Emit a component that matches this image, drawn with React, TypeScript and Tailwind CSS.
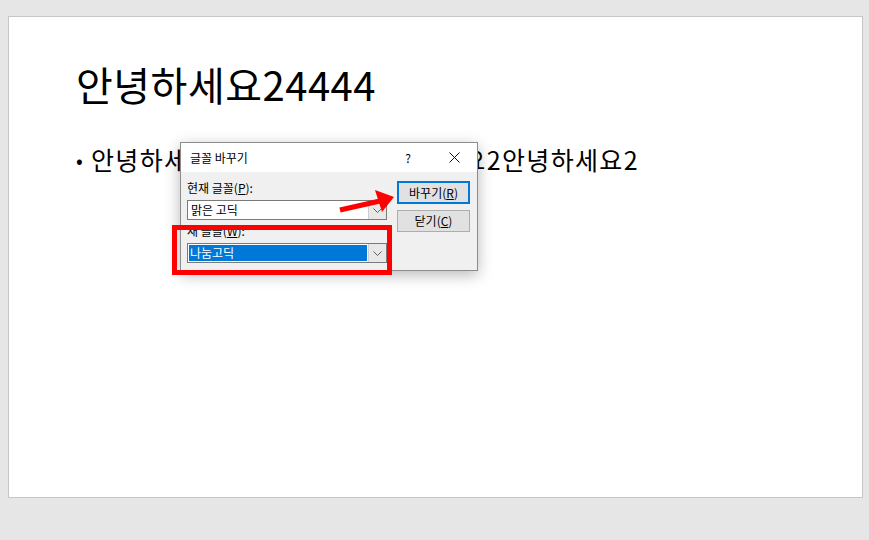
import React from "react";

const KR = { fontFamily: '"Noto Sans CJK KR", "Noto Sans", sans-serif' };

function Chevron() {
  return (
    <svg width="9" height="5" viewBox="0 0 9 5" fill="none">
      <path d="M0.5 0.5 L4.5 4.5 L8.5 0.5" stroke="#606060" strokeWidth="1" />
    </svg>
  );
}

function Combo({ value, selected }: { value: string; selected?: boolean }) {
  return (
    <div className="flex h-[20px] w-[200px] border border-[#7a7a7a] bg-white">
      <div className="flex flex-1 items-center p-[1px]">
        {selected ? (
          <div className="flex h-full w-full items-center bg-[#0078d7] pl-[1px] text-[12px] leading-none text-white">
            {value}
          </div>
        ) : (
          <div className="flex h-full w-full items-center pl-[2px] text-[12px] leading-none text-black">
            {value}
          </div>
        )}
      </div>
      <div className="flex w-[18px] items-center justify-center border-l border-[#cfcfcf] bg-[#e8e8e8]">
        <Chevron />
      </div>
    </div>
  );
}

export default function App() {
  return (
    <div className="relative h-[540px] w-[869px] overflow-hidden bg-[#e6e6e6] pl-[8px] pt-[16px]" style={KR}>
      <div className="h-[482px] w-[855px] border border-[#c6c6c6] bg-white pl-[67px] pt-[47px]">
        <div className="text-[40px] leading-none tracking-[0.5px] text-black">안녕하세요24444</div>
        <div className="mt-[43px] flex items-center text-[25px] leading-none text-black">
          <span className="w-[15px] text-[20px]">•</span>
          <span className="tracking-[1.35px]">안녕하세요2안녕하세요2안녕하세요2안녕하세요2</span>
        </div>
      </div>

      {/* Dialog */}
      <div className="absolute left-[180px] top-[142px] flex h-[129px] w-[298px] flex-col border border-[#8c8c8c] bg-[#f0f0f0] shadow-[0_4px_14px_rgba(0,0,0,0.28)]">
        <div className="flex h-[29px] items-center bg-white pl-[9px] text-[12px] leading-none text-black">
          <span className="flex-1">글꼴 바꾸기</span>
          <span className="w-[46px] text-center text-[12px]">?</span>
          <span className="flex w-[46px] items-center justify-center">
            <svg width="11" height="11" viewBox="0 0 11 11">
              <path d="M0.5 0.5 L10.5 10.5 M10.5 0.5 L0.5 10.5" stroke="#111" strokeWidth="1" />
            </svg>
          </span>
        </div>
        <div className="flex flex-1 pl-[6px] pt-[9px]">
          <div className="flex w-[200px] flex-col">
            <div className="h-[19px] text-[12px] leading-[14px] text-black">
              현재 글꼴(<span className="underline">P</span>):
            </div>
            <Combo value="맑은 고딕" />
            <div className="mt-[4px] h-[19px] text-[12px] leading-[14px] text-black">
              새 글꼴(<span className="underline">W</span>):
            </div>
            <Combo value="나눔고딕" selected />
          </div>
          <div className="ml-[10px] flex flex-col gap-[6px]">
            <div className="flex h-[23px] w-[73px] items-center justify-center border-2 border-[#0078d7] bg-[#e1e1e1] text-[12px] leading-none text-black">
              바꾸기(<span className="underline">R</span>)
            </div>
            <div className="flex h-[22px] w-[73px] items-center justify-center border border-[#adadad] bg-[#e1e1e1] text-[12px] leading-none text-black">
              닫기(<span className="underline">C</span>)
            </div>
          </div>
        </div>
      </div>

      {/* Red highlight rectangle */}
      <div className="absolute left-[172px] top-[225px] h-[50px] w-[220px] border-[5px] border-[#ff0000]" />

      {/* Red arrow */}
      <svg className="absolute left-[330px] top-[180px]" width="75" height="40" viewBox="0 0 75 40">
        <line x1="10" y1="30" x2="50" y2="21" stroke="#ff0000" strokeWidth="5" />
        <polygon points="45,10 64,17 52,32" fill="#ff0000" />
      </svg>
    </div>
  );
}
